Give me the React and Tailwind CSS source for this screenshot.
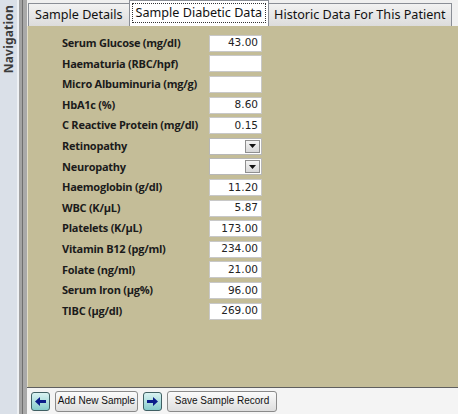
import React from 'react';

const rows = [
  { label: 'Serum Glucose (mg/dl)', value: '43.00' },
  { label: 'Haematuria (RBC/hpf)', value: '' },
  { label: 'Micro Albuminuria (mg/g)', value: '' },
  { label: 'HbA1c (%)', value: '8.60' },
  { label: 'C Reactive Protein (mg/dl)', value: '0.15' },
  { label: 'Retinopathy', select: true },
  { label: 'Neuropathy', select: true },
  { label: 'Haemoglobin (g/dl)', value: '11.20' },
  { label: 'WBC (K/µL)', value: '5.87' },
  { label: 'Platelets (K/µL)', value: '173.00' },
  { label: 'Vitamin B12 (pg/ml)', value: '234.00' },
  { label: 'Folate (ng/ml)', value: '21.00' },
  { label: 'Serum Iron (µg%)', value: '96.00' },
  { label: 'TIBC (µg/dl)', value: '269.00' },
];

const ArrowButton = ({ dir }) => (
  <button className="shrink-0 w-[19px] h-[19px] rounded-[3px] border border-[#3f5f63] bg-gradient-to-b from-[#d9f3f2] to-[#86cbcc] flex items-center justify-center">
    <svg width="13" height="11" viewBox="0 0 13 11">
      {dir === 'left' ? (
        <path d="M1 5.5 L6 1 L6 4 L12 4 L12 7 L6 7 L6 10 Z" fill="#0b1c8a" />
      ) : (
        <path d="M12 5.5 L7 1 L7 4 L1 4 L1 7 L7 7 L7 10 Z" fill="#0b1c8a" />
      )}
    </svg>
  </button>
);

const TextButton = ({ children, w }) => (
  <button
    className={`shrink-0 h-[21px] ${w} rounded-[3px] border border-[#8a8a8a] bg-gradient-to-b from-[#fbfbfb] to-[#dedede] text-[10px] text-[#111] leading-none whitespace-nowrap`}
    style={{ fontFamily: '"Liberation Sans", Arial, sans-serif' }}
  >
    {children}
  </button>
);

const App = () => {
  return (
    <div className="flex w-[458px] h-[414px] overflow-hidden bg-[#f0f0f0]" style={{ fontFamily: '"Liberation Sans", Arial, sans-serif' }}>
      {/* Navigation strip */}
      <div className="shrink-0 w-[17px] bg-[#dae0e8] flex justify-center pt-[5px]">
        <span
          className="[writing-mode:vertical-rl] rotate-180 text-[12px] font-bold text-[#3c3c3c] h-fit tracking-[0.2px]"
          style={{ fontFamily: '"Noto Sans", sans-serif' }}
        >
          Navigation
        </span>
      </div>
      {/* Splitter */}
      <div className="shrink-0 w-[10px] flex">
        <div className="w-[2px] bg-[#eef1f4]" />
        <div className="w-[3px] bg-[#a3a3a3]" />
        <div className="w-[1px] bg-[#6f6f6f]" />
        <div className="w-[4px] bg-[#a9a9a9]" />
      </div>

      <div className="flex-1 flex flex-col min-w-0">
        {/* Tabs */}
        <div className="shrink-0 h-[26px] flex items-end bg-[#f0f0f0] overflow-hidden">
          <div className="flex items-end pl-[1px] shrink-0" style={{ fontFamily: '"Noto Sans", sans-serif' }}>
            <div className="shrink-0 h-[23px] px-[6px] border border-b-0 border-[#8a8e96] bg-gradient-to-b from-[#f2f2f2] to-[#dcdcdc] text-[12.6px] text-[#111] flex items-center whitespace-nowrap">
              Sample Details
            </div>
            <div className="shrink-0 h-[26px] px-[2px] pt-[2px] border border-b-0 border-[#8a8e96] bg-white text-[12.6px] text-[#111] flex items-start -mx-[1px] relative z-10 whitespace-nowrap">
              <span className="border border-dotted border-[#333] px-[3px] h-[20px] flex items-center">
                Sample Diabetic Data
              </span>
            </div>
            <div className="shrink-0 h-[23px] px-[5px] border border-b-0 border-[#8a8e96] bg-gradient-to-b from-[#f2f2f2] to-[#dcdcdc] text-[12.6px] text-[#111] flex items-center whitespace-nowrap">
              Historic Data For This Patient
            </div>
          </div>
        </div>

        {/* Content panel */}
        <div className="flex-1 bg-[#c4bd98] border-l border-[#e2ddc8] pt-[7px] pl-[34px]">
          {rows.map((r) => (
            <div key={r.label} className="h-[20.6px] flex items-center">
              <div
                className="shrink-0 w-[147px] text-[11px] font-bold text-[#1b1b1b] whitespace-nowrap tracking-[-0.25px]"
                style={{ fontFamily: '"Open Sans", sans-serif' }}
              >
                {r.label}
              </div>
              {r.select ? (
                <div className="shrink-0 w-[53px] h-[17px] bg-white border border-[#b7b7b7] flex justify-end items-center pr-[1px]">
                  <div className="w-[15px] h-[13px] bg-gradient-to-b from-[#f4f4f4] to-[#d8d8d8] border border-[#8f8f8f] flex items-center justify-center">
                    <svg width="7" height="4" viewBox="0 0 7 4">
                      <path d="M0 0 L7 0 L3.5 4 Z" fill="#111" />
                    </svg>
                  </div>
                </div>
              ) : (
                <div className="shrink-0 w-[53px] h-[17px] bg-white border border-[#c8c8c8] flex items-center justify-end pr-[3px] text-[10.5px] text-[#222]" style={{ fontFamily: '"DejaVu Sans", sans-serif' }}>
                  {r.value}
                </div>
              )}
            </div>
          ))}
        </div>

        {/* Bottom toolbar */}
        <div className="shrink-0 h-[27px] border-t border-[#5f5f5f] bg-[#f4f4f4] flex items-center gap-[5px] pl-[4px]">
          <ArrowButton dir="left" />
          <TextButton w="w-[83px]">Add New Sample</TextButton>
          <ArrowButton dir="right" />
          <TextButton w="w-[110px]">Save Sample Record</TextButton>
        </div>
      </div>
    </div>
  );
};

export default App;
